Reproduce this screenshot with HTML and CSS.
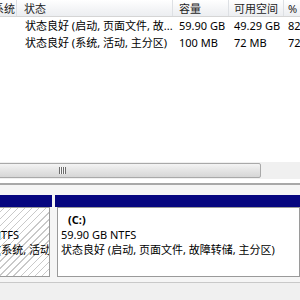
FILE: index.html
```html
<!DOCTYPE html>
<html>
<head>
<meta charset="utf-8">
<link rel="stylesheet" href="styles.css">
</head>
<body>
<div class="list">
  <div class="row head">
    <div class="c c1"><span>系统</span></div>
    <div class="c c2">状态</div>
    <div class="c c3">容量</div>
    <div class="c c4">可用空间</div>
    <div class="c c5">%</div>
  </div>
  <div class="row">
    <div class="c c1"></div>
    <div class="c c2">状态良好 (启动, 页面文件, 故...</div>
    <div class="c c3">59.90 GB</div>
    <div class="c c4">49.29 GB</div>
    <div class="c c5">82</div>
  </div>
  <div class="row">
    <div class="c c1"></div>
    <div class="c c2">状态良好 (系统, 活动, 主分区)</div>
    <div class="c c3">100 MB</div>
    <div class="c c4">72 MB</div>
    <div class="c c5">72</div>
  </div>
  <div class="fill"></div>
  <div class="hscroll">
    <div class="thumb"><span class="grip"></span></div>
  </div>
  <div class="gapline"></div>
</div>
<div class="graph">
  <div class="parts">
    <div class="part sys">
      <div class="bar"></div>
      <div class="body hatch">
        <div class="ln">100 MB NTFS</div>
        <div class="ln">状态良好 (系统, 活动, 主分区)</div>
      </div>
    </div>
    <div class="part main">
      <div class="bar"></div>
      <div class="body">
        <div class="ln name">(C:)</div>
        <div class="ln">59.90 GB NTFS</div>
        <div class="ln">状态良好 (启动, 页面文件, 故障转储, 主分区)</div>
      </div>
    </div>
  </div>
</div>
<div class="footer"></div>
</body>
</html>
```
FILE: styles.css
```css
* { box-sizing: border-box; }
html, body { margin: 0; padding: 0; width: 300px; height: 300px; overflow: hidden; background: #fff; }
body { font-family: "Noto Sans", "Noto Sans CJK SC", sans-serif; font-size: 11px; color: #000; }

.list { height: 183px; display: flex; flex-direction: column; }
.row { display: flex; height: 17px; line-height: 17px; white-space: nowrap; }
.row.head { background: linear-gradient(#ffffff, #f3f4f6 60%, #eceef1); border-bottom: 1px solid #d5d5d5; color: #1e1e1e; padding-top: 2px; line-height: 14px; }
.c { overflow: hidden; flex: none; }
.head .c { border-right: 1px solid #dde0e4; margin-top: -2px; padding-top: 2px; }
.c1 { width: 17px; display: flex; justify-content: flex-end; padding-right: 1px; }
.c1 span { flex: none; }
.c2 { width: 156px; padding-left: 7px; }
.c3 { width: 56px; padding-left: 6px; }
.c4 { width: 55px; padding-left: 5px; }
.c5 { width: 40px; padding-left: 4px; }
.row:not(.head) .c2 { padding-left: 8px; }

.fill { flex: 1; }
.hscroll { height: 17px; background: #f0f0f0; display: flex; padding: 1px 0; }
.thumb { width: 265px; margin-left: -4px; border: 1px solid #a9a9a9; border-radius: 2px; background: linear-gradient(#f4f4f4, #e4e4e4 50%, #d6d6d6); display: flex; align-items: center; justify-content: center; }
.grip { display: block; width: 7px; height: 7px; background: repeating-linear-gradient(90deg, #6c6c6c 0 1px, #f8f8f8 1px 2px); position: relative; left: -66px; }
.gapline { height: 4px; background: #fff; }

.graph { height: 99px; border-top: 2px solid #a8a8a8; background: #f5f5f5; padding-top: 10px; }
.parts { display: flex; gap: 3px; height: 82px; }
.part { display: flex; flex-direction: column; flex: none; }
.bar { height: 12px; background: #06067f; flex: none; }
.body { flex: 1; border: 1px solid #9a9a9a; padding: 4px 0 0 3px; overflow: hidden; white-space: nowrap; line-height: 15px; }
.sys { width: 105px; margin-left: -53px; }
.sys .body { margin-right: 2px; }
.hatch { background-color: #fff; background-image: repeating-linear-gradient(135deg, #fff 0 4px, #c9c9c9 4px 5px); padding-top: 19px; }
.main { flex: 1; }
.main .body { background: #fff; margin-left: 2px; }
.name { font-weight: bold; padding-left: 7px; }
.footer { height: 18px; background: #f0f0f0; border-top: 1px solid #c9c9c9; }
```
